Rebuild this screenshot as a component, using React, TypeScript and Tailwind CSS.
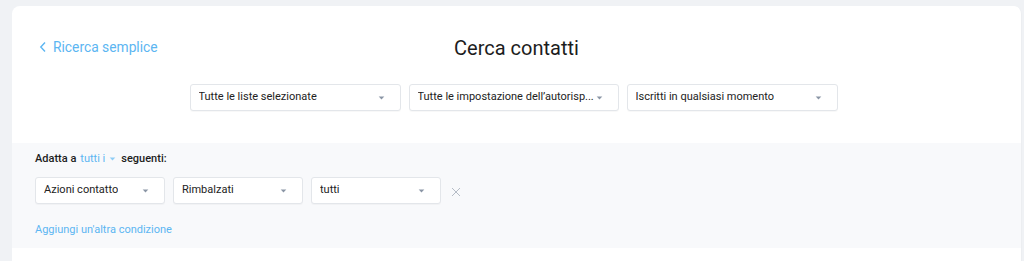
import React from "react";

function Caret() {
  return (
    <svg width="7" height="4" viewBox="0 0 8 5" className="shrink-0">
      <path d="M0.5 0.5 L7.5 0.5 L4 4.5 Z" fill="#8a95a5" />
    </svg>
  );
}

function Select({ label, width, pl = "pl-[8px]" }: { label: string; width: string; pl?: string }) {
  return (
    <div
      className={`${width} ${pl} h-[27px] flex items-center justify-between bg-white border border-[#e3e6ea] rounded-[3px] pr-[15px] text-[11px] text-[#222] shadow-[0_1px_1px_rgba(0,0,0,0.03)]`}
    >
      <span className="whitespace-nowrap overflow-hidden">{label}</span>
      <Caret />
    </div>
  );
}

export default function App() {
  return (
    <div
      className="w-[1024px] h-[261px] bg-[#f0f2f5] overflow-hidden pt-[6px] pl-[12px] pr-[2px]"
      style={{ fontFamily: "Roboto, 'Liberation Sans', sans-serif" }}
    >
      <div className="bg-white rounded-t-[8px] h-[300px] border-r border-[#eceef1]">
        <div className="relative h-[137px]">
          <div className="absolute left-[27px] top-[32px] flex items-center gap-[6px] text-[#5cb6f2] text-[13.8px] leading-[18px]">
            <svg width="8" height="12" viewBox="0 0 8 12">
              <path d="M6 1.5 L1.8 6 L6 10.5" fill="none" stroke="#5cb6f2" strokeWidth="1.4" />
            </svg>
            <span>Ricerca semplice</span>
          </div>
          <div className="pt-[28px] text-center text-[20px] text-[#1d1d1d] leading-[28px]">Cerca contatti</div>
          <div className="flex justify-center gap-[8px] mt-[22px] pr-[6px]">
            <Select label="Tutte le liste selezionate" width="w-[211px]" />
            <Select label="Tutte le impostazione dell’autorisp..." width="w-[210px]" />
            <Select label="Iscritti in qualsiasi momento" width="w-[211px]" />
          </div>
        </div>
        <div className="bg-[#f8f9fb] h-[105px] pl-[23px] pt-[8px]">
          <div className="text-[11px] font-medium text-[#1d1d1d] flex items-center h-[16px]">
            <span>Adatta a</span>
            <span className="text-[#5cb6f2] font-normal ml-[4px]">tutti i</span>
            <span className="ml-[4px] mr-[5px] mt-[-1px]">
              <svg width="7" height="4" viewBox="0 0 8 5">
                <path d="M0.5 0.5 L7.5 0.5 L4 4.5 Z" fill="#8fcdf6" />
              </svg>
            </span>
            <span>seguenti:</span>
          </div>
          <div className="flex items-center gap-[8px] mt-[10px]">
            <Select label="Azioni contatto" width="w-[130px]" />
            <Select label="Rimbalzati" width="w-[130px]" />
            <Select label="tutti" width="w-[130px]" />
            <svg width="10" height="10" viewBox="0 0 10 10" className="ml-[2px] mt-[2px]">
              <path d="M1 1 L9 9 M9 1 L1 9" stroke="#b5bcc6" strokeWidth="1" />
            </svg>
          </div>
          <div className="mt-[19px] text-[11px] text-[#5cb6f2] leading-[14px]">Aggiungi un'altra condizione</div>
        </div>
      </div>
    </div>
  );
}
